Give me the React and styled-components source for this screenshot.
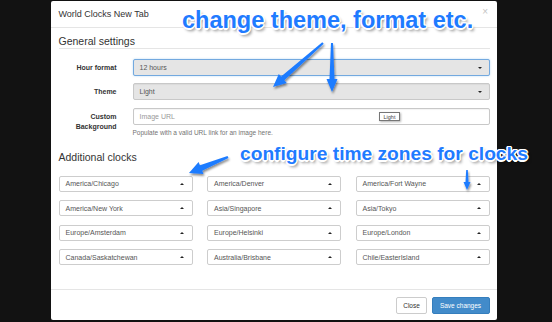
import React from 'react';
import styled, { createGlobalStyle } from 'styled-components';

const Global = createGlobalStyle`
  html, body { margin: 0; padding: 0; background: #121212; }
  body { font-family: "Liberation Sans", Arial, sans-serif; }
  * { box-sizing: border-box; }
`;

const Page = styled.div`
  position: relative;
  width: 552px;
  height: 322px;
  overflow: hidden;
  background: #121212;
  padding: 1px 0 0 51px;
`;

const Modal = styled.div`
  width: 446px;
  height: 319px;
  background: #fff;
  border-radius: 2px;
  display: flex;
  flex-direction: column;
`;

const Header = styled.div`
  height: 27px;
  padding: 0 9px 0 7.5px;
  display: flex;
  align-items: center;
  justify-content: space-between;
  border-bottom: 1px solid #e5e5e5;
`;

const Title = styled.div`
  font-size: 9px;
  color: #333;
`;

const CloseX = styled.div`
  font-size: 10px;
  color: #c4c4c4;
  align-self: flex-start;
  margin-top: 5px;
`;

const Body = styled.div`
  flex: 1;
  padding: 7px 7.5px 0 7.5px;
`;

const Legend = styled.div`
  font-size: 10.5px;
  line-height: 13px;
  color: #333;
  border-bottom: ${p => (p.$line ? '1px solid #e5e5e5' : '1px solid transparent')};
  margin: ${p => p.$mt || 0}px 0 ${p => p.$mb || 0}px;
`;

const FormRow = styled.div`
  display: grid;
  grid-template-columns: 74px 1fr;
  margin-bottom: ${p => p.$mb || 0}px;
`;

const Label = styled.div`
  font-size: 7px;
  font-weight: bold;
  color: #333;
  text-align: right;
  padding: 3.5px 16px 0 0;
  line-height: 10px;
`;

const Control = styled.div`
  height: 17px;
  border: 1px solid ${p => (p.$focus ? '#73a9df' : '#c8c8c8')};
  box-shadow: ${p => (p.$focus ? '0 0 2px rgba(102,175,233,0.5)' : 'inset 0 1px 1px rgba(0,0,0,0.05)')};
  background: ${p => (p.$gray ? '#e5e5e5' : '#fff')};
  border-radius: 2px;
  padding: 0 6px;
  display: flex;
  align-items: center;
  justify-content: space-between;
  font-size: 7px;
  color: ${p => (p.$placeholder ? '#999' : '#555')};
`;

const CaretDown = styled.span`
  width: 0;
  height: 0;
  border-left: 2px solid transparent;
  border-right: 2px solid transparent;
  border-top: 2px solid #222;
  margin-right: 1px;
`;

const CaretUp = styled.span`
  width: 0;
  height: 0;
  border-left: 2px solid transparent;
  border-right: 2px solid transparent;
  border-bottom: 2.5px solid #222;
  margin-right: 2px;
`;

const Help = styled.div`
  font-size: 6.5px;
  line-height: 9px;
  color: #737373;
  margin-top: 3px;
`;

const ClockGrid = styled.div`
  display: grid;
  grid-template-columns: repeat(3, 134px);
  column-gap: 14.5px;
  row-gap: 8.5px;
`;

const ClockSelect = styled.div`
  height: 16px;
  border: 1px solid #cdcdcd;
  border-radius: 2px;
  padding: 0 6px;
  display: flex;
  align-items: center;
  justify-content: space-between;
  font-size: 7px;
  color: #555;
  background: #fff;
`;

const Footer = styled.div`
  height: 31px;
  border-top: 1px solid #e5e5e5;
  padding: 7px 7.5px 0 7.5px;
  display: flex;
  justify-content: flex-end;
  align-items: flex-start;
  gap: 4.5px;
`;

const Button = styled.div`
  height: 16.5px;
  width: ${p => p.$w}px;
  border-radius: 2px;
  font-size: 6.5px;
  display: flex;
  align-items: center;
  justify-content: center;
  background: ${p => (p.$primary ? '#428bca' : '#fff')};
  color: ${p => (p.$primary ? '#fff' : '#333')};
  border: 1px solid ${p => (p.$primary ? '#357ebd' : '#cccccc')};
`;

const Tip = styled.div`
  position: absolute;
  left: 379px;
  top: 112px;
  width: 21px;
  height: 9px;
  border: 1px solid #767676;
  background: #fff;
  font-size: 5.5px;
  color: #444;
  display: flex;
  align-items: center;
  justify-content: center;
  box-shadow: 1px 1px 2px rgba(0,0,0,0.3);
`;

const Note = styled.div`
  position: absolute;
  left: ${p => p.$x}px;
  top: ${p => p.$y}px;
  font-size: ${p => p.$size}px;
  line-height: 1;
  font-weight: bold;
  white-space: nowrap;
  color: #1f7bff;
  text-shadow:
    1.5px 0 0 #fff, -1.5px 0 0 #fff, 0 1.5px 0 #fff, 0 -1.5px 0 #fff,
    1px 1px 0 #fff, -1px -1px 0 #fff, 1px -1px 0 #fff, -1px 1px 0 #fff,
    2px 3px 3px rgba(0,0,0,0.45);
`;

const Overlay = styled.svg`
  position: absolute;
  left: 0;
  top: 0;
  width: 552px;
  height: 322px;
  pointer-events: none;
`;

function arrowPoints(x1, y1, x2, y2, o) {
  const { tail = 1, shaft = 2.5, head = 6, len = 13 } = o || {};
  const dx = x2 - x1, dy = y2 - y1;
  const L = Math.hypot(dx, dy);
  const ux = dx / L, uy = dy / L;
  const nx = -uy, ny = ux;
  const bx = x2 - ux * len, by = y2 - uy * len;
  const pts = [
    [x1 + nx * tail, y1 + ny * tail],
    [bx + nx * shaft, by + ny * shaft],
    [bx + nx * head, by + ny * head],
    [x2, y2],
    [bx - nx * head, by - ny * head],
    [bx - nx * shaft, by - ny * shaft],
    [x1 - nx * tail, y1 - ny * tail],
  ];
  return pts.map(p => p[0].toFixed(1) + ',' + p[1].toFixed(1)).join(' ');
}

const arrows = [
  { a: [323, 43, 273, 87], o: { tail: 1, shaft: 2.5, head: 6, len: 13 } },
  { a: [332, 43, 332, 92], o: { tail: 1, shaft: 2.5, head: 5.5, len: 13 } },
  { a: [228, 157, 189, 173], o: { tail: 1.2, shaft: 3, head: 6.5, len: 13 } },
  { a: [467, 170, 467, 190], o: { tail: 0.8, shaft: 1.5, head: 3.5, len: 8 } },
];

const clocks = [
  'America/Chicago', 'America/Denver', 'America/Fort Wayne',
  'America/New York', 'Asia/Singapore', 'Asia/Tokyo',
  'Europe/Amsterdam', 'Europe/Helsinki', 'Europe/London',
  'Canada/Saskatchewan', 'Australia/Brisbane', 'Chile/EasterIsland',
];

export default function App() {
  return (
    <>
      <Global />
      <Page>
        <Modal>
          <Header>
            <Title>World Clocks New Tab</Title>
            <CloseX>×</CloseX>
          </Header>
          <Body>
            <Legend $line $mb={10}>General settings</Legend>
            <FormRow $mb={7}>
              <Label>Hour format</Label>
              <Control $gray $focus>
                <span>12 hours</span>
                <CaretDown />
              </Control>
            </FormRow>
            <FormRow $mb={8}>
              <Label>Theme</Label>
              <Control $gray>
                <span>Light</span>
                <CaretDown />
              </Control>
            </FormRow>
            <FormRow>
              <Label>Custom<br />Background</Label>
              <div>
                <Control $placeholder>Image URL</Control>
                <Help>Populate with a valid URL link for an image here.</Help>
              </div>
            </FormRow>
            <Legend $mt={13.5} $mb={11}>Additional clocks</Legend>
            <ClockGrid>
              {clocks.map(c => (
                <ClockSelect key={c}>
                  <span>{c}</span>
                  <CaretUp />
                </ClockSelect>
              ))}
            </ClockGrid>
          </Body>
          <Footer>
            <Button $w={31}>Close</Button>
            <Button $w={58} $primary>Save changes</Button>
          </Footer>
        </Modal>
        <Tip>Light</Tip>
        <Overlay viewBox="0 0 552 322">
          <defs>
            <filter id="sh" x="-50%" y="-50%" width="200%" height="200%">
              <feDropShadow dx="1" dy="2" stdDeviation="1.3" floodColor="#000" floodOpacity="0.45" />
            </filter>
          </defs>
          {arrows.map((ar, i) => (
            <polygon
              key={i}
              points={arrowPoints(...ar.a, ar.o)}
              fill="#1f7bff"
              filter="url(#sh)"
            />
          ))}
        </Overlay>
        <Note $x={182} $y={8.5} $size={23.5}>change theme, format etc.</Note>
        <Note $x={240} $y={144} $size={19.2}>configure time zones for clocks</Note>
      </Page>
    </>
  );
}
